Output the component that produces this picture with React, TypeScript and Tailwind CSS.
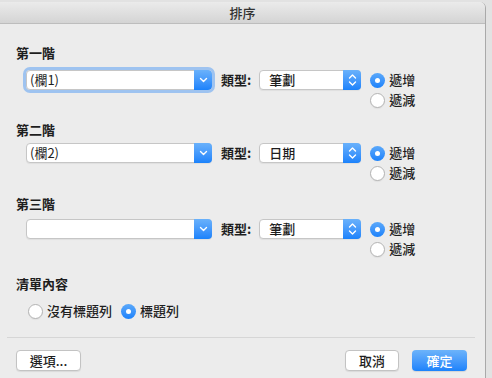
import React from "react";

const FONT = "font-['Noto_Sans_CJK_TC','Noto_Sans',sans-serif]";

function ChevronDown() {
  return (
    <svg width="9" height="6" viewBox="0 0 9 6">
      <path d="M1.5 1.5 L4.5 4.5 L7.5 1.5" fill="none" stroke="white" strokeWidth="1.4" strokeLinecap="round" strokeLinejoin="round" />
    </svg>
  );
}

function ChevronUpDown() {
  return (
    <svg width="9" height="14" viewBox="0 0 9 14">
      <path d="M1.5 5 L4.5 2 L7.5 5" fill="none" stroke="white" strokeWidth="1.4" strokeLinecap="round" strokeLinejoin="round" />
      <path d="M1.5 9 L4.5 12 L7.5 9" fill="none" stroke="white" strokeWidth="1.4" strokeLinecap="round" strokeLinejoin="round" />
    </svg>
  );
}

function ComboBox({ value, focused }: { value: string; focused?: boolean }) {
  return (
    <div
      className={`flex h-[20px] w-[186px] shrink-0 rounded-[4px] border border-[#c6c6c6] bg-white shadow-[0_1px_1px_rgba(0,0,0,0.06)] ${
        focused ? "outline outline-[3px] outline-[#9ec3f0]" : ""
      }`}
    >
      <div className="flex-1 pl-[3px] text-[13px] leading-[18px] text-[#1e1e1e]">{value}</div>
      <div className="-my-px -mr-px flex w-[18px] items-center justify-center rounded-r-[4px] bg-gradient-to-b from-[#69b1fb] to-[#1a82fb]">
        <ChevronDown />
      </div>
    </div>
  );
}

function PopUp({ value }: { value: string }) {
  return (
    <div className="flex h-[20px] w-[102px] shrink-0 rounded-[4px] border border-[#c6c6c6] bg-white shadow-[0_1px_1px_rgba(0,0,0,0.06)]">
      <div className="flex-1 pl-[9px] text-[13px] font-medium leading-[18px] text-[#1e1e1e]">{value}</div>
      <div className="-my-px -mr-px flex w-[18px] items-center justify-center rounded-r-[4px] bg-gradient-to-b from-[#69b1fb] to-[#1a82fb]">
        <ChevronUpDown />
      </div>
    </div>
  );
}

function Radio({ checked, label }: { checked?: boolean; label: string }) {
  return (
    <div className="flex h-[20px] items-center gap-[4px]">
      {checked ? (
        <div className="flex h-[15px] w-[15px] items-center justify-center rounded-full bg-gradient-to-b from-[#5aa8fa] to-[#1a82fb]">
          <div className="h-[5px] w-[5px] rounded-full bg-white" />
        </div>
      ) : (
        <div className="h-[15px] w-[15px] rounded-full border border-[#b3b3b3] bg-white shadow-[0_1px_1px_rgba(0,0,0,0.05)]" />
      )}
      <span className="text-[13px] font-medium leading-[20px] text-[#1e1e1e]">{label}</span>
    </div>
  );
}

function SortRow({ value, type, focused }: { value: string; type: string; focused?: boolean }) {
  return (
    <div className="ml-[10px] flex items-start">
      <ComboBox value={value} focused={focused} />
      <span className="ml-[9px] text-[13px] font-semibold leading-[20px] text-[#1e1e1e]">類型:</span>
      <div className="ml-[8px]">
        <PopUp value={type} />
      </div>
      <div className="ml-[9px] flex flex-col">
        <Radio checked label="遞增" />
        <Radio label="遞減" />
      </div>
    </div>
  );
}

function Label({ children }: { children: React.ReactNode }) {
  return <div className="h-[17px] text-[13px] font-bold leading-[17px] text-[#1e1e1e]">{children}</div>;
}

export default function App() {
  return (
    <div className={`${FONT} h-[378px] w-[492px] overflow-hidden bg-[#e2e2e2] pt-[2px]`}>
      <div className="flex h-[380px] w-[486px] flex-col overflow-hidden rounded-tr-[6px] border-r border-[#a9a9a9] bg-[#ececec]">
        <div className="flex h-[22px] shrink-0 items-center justify-center border-b border-[#bdbdbd] bg-gradient-to-b from-[#ebebeb] to-[#d4d4d4] text-[13px] font-medium text-[#333]">
          排序
        </div>
        <div className="flex flex-col pl-[16px] pt-[20px]">
          <Label>第一階</Label>
          <div className="mt-[9px]">
            <SortRow value="(欄1)" type="筆劃" focused />
          </div>
          <div className="mt-[11px]">
            <Label>第二階</Label>
          </div>
          <div className="mt-[5px]">
            <SortRow value="(欄2)" type="日期" />
          </div>
          <div className="mt-[12px]">
            <Label>第三階</Label>
          </div>
          <div className="mt-[7px]">
            <SortRow value="" type="筆劃" />
          </div>
          <div className="mt-[16px]">
            <Label>清單內容</Label>
          </div>
          <div className="ml-[12px] mt-[9px] flex gap-[9px]">
            <Radio label="沒有標題列" />
            <Radio checked label="標題列" />
          </div>
        </div>
        <div className="ml-[7px] mr-[10px] mt-[16px] h-px bg-[#d6d6d6]" />
        <div className="mt-[12px] flex px-[16px] pr-[18px]">
          <button className="h-[21px] w-[65px] rounded-[4px] border border-[#c3c3c3] bg-white text-[13px] font-medium leading-[19px] text-[#1e1e1e] shadow-[0_1px_1px_rgba(0,0,0,0.08)]">
            選項...
          </button>
          <div className="flex-1" />
          <button className="h-[21px] w-[54px] rounded-[4px] border border-[#c3c3c3] bg-white text-[13px] font-medium leading-[19px] text-[#1e1e1e] shadow-[0_1px_1px_rgba(0,0,0,0.08)]">
            取消
          </button>
          <button className="ml-[13px] h-[21px] w-[55px] rounded-[4px] bg-gradient-to-b from-[#6cb3fa] to-[#1a82fb] text-[13px] font-medium leading-[21px] text-white shadow-[0_1px_1px_rgba(0,0,0,0.1)]">
            確定
          </button>
        </div>
      </div>
    </div>
  );
}
